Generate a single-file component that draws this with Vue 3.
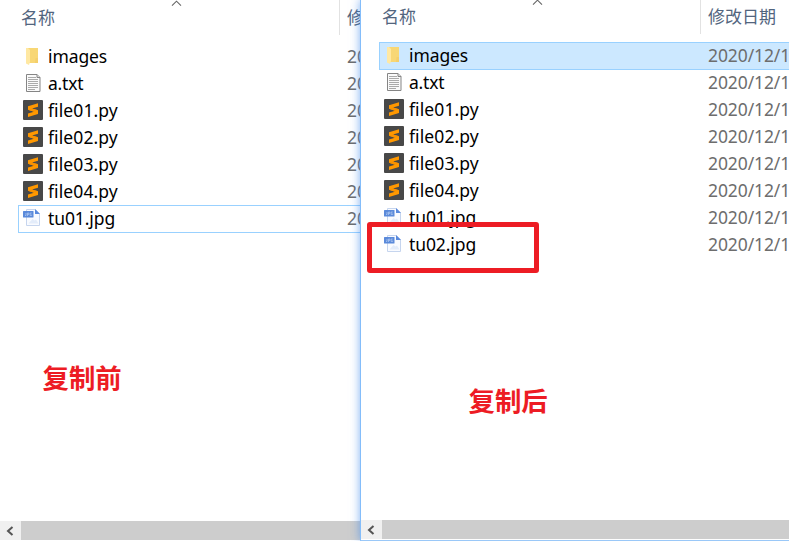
<script setup>
const names = ['images', 'a.txt', 'file01.py', 'file02.py', 'file03.py', 'file04.py', 'tu01.jpg']
const kindOf = (name) => {
  if (name.endsWith('.py')) return 'py'
  if (name.endsWith('.txt')) return 'txt'
  if (name.endsWith('.jpg')) return 'jpg'
  return 'folder'
}
const toFiles = (list) => list.map((name) => ({ name, kind: kindOf(name) }))
const panes = [
  { id: 'before', files: toFiles(names), focused: 'tu01.jpg', selected: '' },
  { id: 'after', files: toFiles([...names, 'tu02.jpg']), focused: '', selected: 'images' },
]
</script>

<template>
  <main class="screen">
    <section v-for="pane in panes" :key="pane.id" class="pane" :class="pane.id">
      <header class="head">
        <div class="col-name">
          <span>名称</span>
          <svg class="sort" width="11" height="7" viewBox="0 0 11 7"><path d="M1 5.7 5.5 1.2 10 5.7" fill="none" stroke="#666" stroke-width="1.1" /></svg>
        </div>
        <div class="col-date">修改日期</div>
      </header>
      <ul class="list">
        <li
          v-for="file in pane.files"
          :key="file.name"
          class="row"
          :class="{ focused: file.name === pane.focused, selected: file.name === pane.selected }"
        >
          <svg class="icon" width="20" height="20" viewBox="0 0 20 20">
            <g v-if="file.kind === 'folder'">
              <path d="M5 2h10v15H5z" fill="#f8d775" />
              <path d="M12.500 12H15v5h-3z" fill="#f4cf6c" />
              <path d="M3 2h2l2 2v12l-1 3-3-1.500z" fill="#ffe8a2" />
            </g>
            <g v-else-if="file.kind === 'txt'">
              <path d="M3.500 1.500h10.500l3 3v14H3.500z" fill="#fafafa" stroke="#858585" />
              <path d="M14 1.500v3h3" fill="#ddd" stroke="#858585" />
              <path d="M5 4.500h8M5 6.500h10M5 8.500h10M5 10.500h10M5 12.500h10M5 14.500h10M5 16.500h7" stroke="#aaa" fill="none" />
            </g>
            <g v-else-if="file.kind === 'py'">
              <rect width="20" height="20" rx="1" fill="#484848" />
              <path d="M5 6.300 15 3.200v3.500l-6 1.900 6 1.700v3.600L5 17v-3.500l6-1.800-6-1.900z" fill="#ff9800" />
              <path d="m9 8.600 6 1.700-4 1.400-6-1.900z" fill="#f99200" />
            </g>
            <g v-else>
              <path d="M3.500 1.500h9l4 4v12H3.500z" fill="#f9fbff" stroke="#c6d5ee" />
              <path d="m5.500 15.500 4-4.500 2 1.500 1.500-1 2.500 4z" fill="#e3ecfa" />
              <path d="M12 1v5h5z" fill="#5a8add" />
              <rect y="3" width="10.500" height="6.500" rx=".5" fill="#5b8ada" />
              <path d="M2 7.500h1V5M4.500 8V5h1.300v1.500H4.500M8.700 5H7.200v2.500h1.500v-1" fill="none" stroke="#b4cbf2" stroke-width=".7" />
            </g>
          </svg>
          <span class="name" :class="file.kind">{{ file.name }}</span>
          <span class="date">2020/12/1</span>
        </li>
      </ul>
      <footer class="scroll">
        <div class="button">
          <svg width="8" height="10" viewBox="0 0 8 10"><path d="M6.500 1 2 5l4.500 4" fill="none" stroke="#555" stroke-width="2" /></svg>
        </div>
        <div class="thumb"></div>
      </footer>
    </section>
    <div class="highlight"></div>
    <strong class="note note-before">复制前</strong>
    <strong class="note note-after">复制后</strong>
  </main>
</template>

<style scoped>
.screen {
  position: relative;
  display: flex;
  width: 789px;
  height: 541px;
  overflow: hidden;
  background: #fff;
  font-family: "Noto Sans", "Noto Sans CJK SC", sans-serif;
  font-size: 17px;
}
.pane {
  display: flex;
  flex-direction: column;
  box-sizing: border-box;
  overflow: hidden;
  background: #fff;
}
.before {
  flex: 0 0 360px;
  padding-bottom: 1px;
}
.after {
  position: relative;
  flex: 0 0 429px;
  border-left: 1px solid #84bdfa;
  border-bottom: 1px solid #9ac8f8;
  padding-bottom: 1px;
  box-shadow: 0 0 9px rgba(60, 135, 235, 0.65);
}
.head {
  display: flex;
  flex: none;
  height: 35px;
  color: #52657e;
  font-family: "Noto Sans CJK SC", sans-serif;
  font-weight: 400;
  line-height: 34px;
  white-space: nowrap;
}
.after .head {
  height: 34px;
  line-height: 32px;
}
.col-name {
  display: flex;
  flex: 0 0 339px;
  box-sizing: border-box;
  padding-left: 21px;
}
.sort {
  margin-left: 116px;
}
.after .sort {
  margin-top: -1px;
}
.col-date {
  flex: none;
  border-left: 1px solid #e2e2e2;
  padding-left: 7px;
}
.list {
  flex: 1;
  margin: 8px 0 0;
  padding: 0 0 0 18px;
  list-style: none;
}
.row {
  display: flex;
  align-items: center;
  box-sizing: border-box;
  width: 430px;
  height: 28px;
  margin-bottom: -1px;
  border: 1px solid transparent;
  padding-left: 4px;
  white-space: nowrap;
}
.row.focused {
  border-color: #99d1ff;
}
.row.selected {
  border-color: #99d1ff;
  background: #cce8ff;
}
.icon {
  flex: none;
  margin-bottom: 2px;
}
.name {
  flex: 0 0 299px;
  margin-left: 5px;
  padding-bottom: 2px;
  color: #000;
  font-size: 17.5px;
  line-height: 24px;
}
.name.folder,
.name.jpg {
  letter-spacing: -0.1px;
}
.name.txt {
  letter-spacing: -0.2px;
}
.name.py {
  letter-spacing: 0.1px;
}
.date {
  padding-bottom: 2px;
  color: #6d6d6d;
  font-size: 17.5px;
  line-height: 24px;
  letter-spacing: -0.1px;
}
.scroll {
  display: flex;
  flex: none;
  height: 19px;
  background: #f0f0f0;
}
.button {
  display: flex;
  flex: 0 0 21px;
  box-sizing: border-box;
  align-items: center;
  padding-left: 6px;
}
.thumb {
  flex: 1;
  background: #cdcdcd;
}
.highlight {
  position: absolute;
  left: 367px;
  top: 222px;
  box-sizing: border-box;
  width: 172px;
  height: 51px;
  border: 5px solid #ed1c24;
  border-radius: 3px;
}
.note {
  position: absolute;
  color: #ed1c24;
  font-family: "Noto Sans CJK SC", sans-serif;
  font-size: 26.4px;
  font-weight: 700;
  line-height: 36px;
}
.note-before {
  left: 42.5px;
  top: 359px;
}
.note-after {
  left: 468.5px;
  top: 382px;
}
</style>
